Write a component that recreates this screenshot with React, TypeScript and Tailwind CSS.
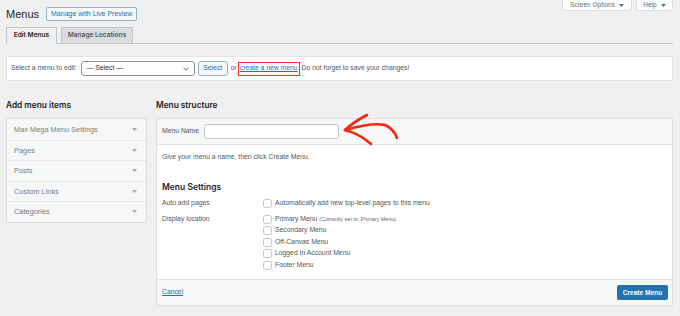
import React from 'react';

const font = { fontFamily: '"Liberation Sans", Arial, sans-serif' };
const heading = { fontFamily: 'Inter, "Liberation Sans", Arial, sans-serif' };

const ACCORDION = ['Max Mega Menu Settings', 'Pages', 'Posts', 'Custom Links', 'Categories'];

const LOCATIONS: { label: string; note?: string }[] = [
  { label: 'Primary Menu', note: '(Currently set to: Primary Menu)' },
  { label: 'Secondary Menu' },
  { label: 'Off-Canvas Menu' },
  { label: 'Logged In Account Menu' },
  { label: 'Footer Menu' },
];

const Caret: React.FC = () => (
  <svg width="5" height="3" viewBox="0 0 10 6" className="shrink-0">
    <path d="M0 0h10L5 6z" fill="currentColor" />
  </svg>
);

const Checkbox: React.FC = () => (
  <span className="w-[9px] h-[9px] shrink-0 rounded-[2.5px] border border-[#c3c4c7] bg-white" />
);

const Arrow: React.FC = () => (
  <svg
    className="absolute left-[186px] top-[-7px] pointer-events-none"
    width="64"
    height="40"
    viewBox="0 0 64 40"
    fill="none"
    stroke="#f5260d"
    strokeWidth="2.6"
    strokeLinecap="round"
    strokeLinejoin="round"
  >
    {/* tip at (2,18) in local coords */}
    <path d="M2 18 Q12 9 24 3" />
    <path d="M2 18 Q17 22 28 32" />
    <path d="M2 18 Q30 10 42 13 Q51 17 54 26" />
  </svg>
);

const App: React.FC = () => {
  return (
    <div className="w-[680px] h-[316px] overflow-hidden bg-[#f0f0f1] text-[#3c434a] pl-[6px] pr-[7px]" style={font}>
      {/* screen options */}
      <div className="flex justify-end gap-[4px] h-[11px]">
        <div className="w-[70px] h-[11px] bg-white border border-t-0 border-[#dcdcde] rounded-b-[3px] flex items-center justify-center gap-[4px] text-[6.5px] text-[#646970]">
          Screen Options <Caret />
        </div>
        <div className="w-[37px] h-[11px] bg-white border border-t-0 border-[#dcdcde] rounded-b-[3px] flex items-center justify-center gap-[4px] text-[6.5px] text-[#646970]">
          Help <Caret />
        </div>
      </div>

      {/* title */}
      <div className="flex items-center gap-[7px] mt-[-4px] h-[14px]">
        <h1 className="text-[11px] leading-[14px] text-[#1d2327]">Menus</h1>
        <span className="h-[14px] px-[4px] flex items-center border border-[#8bb1d6] bg-[#f6f7f7] rounded-[2px] text-[7px] text-[#2271b1]">
          Manage with Live Preview
        </span>
      </div>

      {/* tabs */}
      <div className="flex gap-[4px] mt-[6px] border-b border-[#c3c4c7] h-[17px]" style={heading}>
        <div className="w-[51px] h-[17px] border border-b-0 border-[#c3c4c7] bg-[#f0f0f1] flex items-center justify-center text-[6.6px] font-semibold text-[#1d2327] mb-[-1px]">
          Edit Menus
        </div>
        <div className="w-[72px] h-[16px] border border-b-0 border-[#c3c4c7] bg-[#dcdcde] flex items-center justify-center text-[6.6px] font-semibold text-[#50575e]">
          Manage Locations
        </div>
      </div>

      {/* select menu panel */}
      <div className="mt-[12px] h-[25px] bg-white border border-[#e4e4e6] flex items-center pl-[4px] text-[6.8px] text-[#50575e]">
        <span>Select a menu to edit:</span>
        <div className="ml-[4px] w-[114px] h-[15px] border border-[#8c8f94] rounded-[3px] flex items-center justify-between pl-[5px] pr-[5px] text-[#2c3338]">
          <span>— Select —</span>
          <svg width="6" height="4" viewBox="0 0 12 8" fill="none" stroke="#50575e" strokeWidth="1.8">
            <path d="M1 1.5l5 5 5-5" />
          </svg>
        </div>
        <span className="ml-[3px] w-[30px] h-[15px] border border-[#8bb1d6] bg-[#f6f7f7] rounded-[3px] flex items-center justify-center text-[#2271b1]">
          Select
        </span>
        <span className="ml-[3px]">or</span>
        <span className="ml-[1px] border border-[#ff2b1f] px-[1px] h-[14px] flex items-center">
          <span className="underline text-[#2271b1]">create a new menu</span>
        </span>
        <span className="ml-[2px]">Do not forget to save your changes!</span>
      </div>

      {/* columns */}
      <div className="flex gap-[9px] mt-[19px]">
        {/* left */}
        <div className="w-[141px] shrink-0">
          <h2 className="text-[8.3px] leading-[10px] font-semibold text-[#1d2327]" style={heading}>Add menu items</h2>
          <div className="mt-[8px] border border-[#dcdcde] bg-[#f6f7f7]">
            {ACCORDION.map((item, i) => (
              <div
                key={item}
                className={`h-[20.5px] flex items-center justify-between pl-[7px] pr-[9px] text-[7.4px] text-[#787c82] ${i > 0 ? 'border-t border-[#e4e4e6]' : ''}`}
              >
                <span>{item}</span>
                <span className="text-[#a7aaad]">
                  <Caret />
                </span>
              </div>
            ))}
          </div>
        </div>

        {/* right */}
        <div className="flex-1">
          <h2 className="text-[8.3px] leading-[10px] font-semibold text-[#1d2327]" style={heading}>Menu structure</h2>
          <div className="mt-[8px] border border-[#dcdcde] bg-white">
            <div className="relative h-[26px] bg-[#f6f7f7] border-b border-[#e4e4e6] flex items-center pl-[5px] text-[6.8px] text-[#50575e]">
              <span>Menu Name</span>
              <span className="ml-[5px] w-[135px] h-[15px] bg-white border border-[#c3c4c7] rounded-[3px]" />
              <Arrow />
            </div>

            <div className="pl-[5px] pt-[7px] pb-[9px] text-[6.8px] text-[#50575e]">
              <p className="leading-[9px]">Give your menu a name, then click Create Menu.</p>
              <h3 className="mt-[21px] text-[8.5px] leading-[10px] font-semibold text-[#1d2327]" style={heading}>Menu Settings</h3>

              <div className="mt-[6px] flex h-[10px] items-center">
                <span className="w-[101px] shrink-0">Auto add pages</span>
                <Checkbox />
                <span className="ml-[3px]">Automatically add new top-level pages to this menu</span>
              </div>

              <div className="mt-[6px] flex">
                <span className="w-[101px] shrink-0 h-[10px] flex items-center">Display location</span>
                <div className="flex flex-col gap-[1.5px]">
                  {LOCATIONS.map((loc) => (
                    <div key={loc.label} className="flex h-[10px] items-center">
                      <Checkbox />
                      <span className="ml-[3px]">{loc.label}</span>
                      {loc.note && <span className="ml-[2px] text-[5.4px] text-[#646970]">{loc.note}</span>}
                    </div>
                  ))}
                </div>
              </div>
            </div>

            <div className="h-[26px] border-t border-[#e4e4e6] bg-[#f6f7f7] flex items-center justify-between pl-[5px] pr-[4px]">
              <span className="text-[6.8px] underline text-[#2271b1]">Cancel</span>
              <span className="w-[51px] h-[15px] bg-[#2271b1] rounded-[2px] flex items-center justify-center text-[6.6px] font-bold text-white">
                Create Menu
              </span>
            </div>
          </div>
        </div>
      </div>
    </div>
  );
};

export default App;
